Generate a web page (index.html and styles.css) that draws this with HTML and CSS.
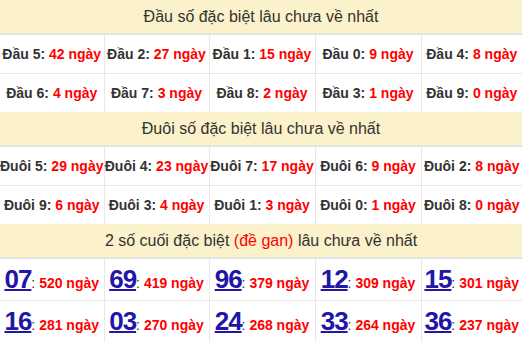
FILE: index.html
```html
<!DOCTYPE html>
<html lang="vi">
<head>
<meta charset="utf-8">
<title>Gan đặc biệt</title>
<link rel="stylesheet" href="styles.css">
</head>
<body>
<table class="gan">
  <colgroup>
    <col class="c1"><col class="c2"><col class="c3"><col class="c4"><col class="c5">
  </colgroup>
  <tr class="head"><th colspan="5">Đầu số đặc biệt lâu chưa về nhất</th></tr>
  <tr>
    <td>Đầu 5: <span class="v">42 ngày</span></td>
    <td>Đầu 2: <span class="v">27 ngày</span></td>
    <td>Đầu 1: <span class="v">15 ngày</span></td>
    <td>Đầu 0: <span class="v">9 ngày</span></td>
    <td>Đầu 4: <span class="v">8 ngày</span></td>
  </tr>
  <tr>
    <td>Đầu 6: <span class="v">4 ngày</span></td>
    <td>Đầu 7: <span class="v">3 ngày</span></td>
    <td>Đầu 8: <span class="v">2 ngày</span></td>
    <td>Đầu 3: <span class="v">1 ngày</span></td>
    <td>Đầu 9: <span class="v">0 ngày</span></td>
  </tr>
  <tr class="head"><th colspan="5">Đuôi số đặc biệt lâu chưa về nhất</th></tr>
  <tr>
    <td>Đuôi 5: <span class="v">29 ngày</span></td>
    <td>Đuôi 4: <span class="v">23 ngày</span></td>
    <td>Đuôi 7: <span class="v">17 ngày</span></td>
    <td>Đuôi 6: <span class="v">9 ngày</span></td>
    <td>Đuôi 2: <span class="v">8 ngày</span></td>
  </tr>
  <tr>
    <td>Đuôi 9: <span class="v">6 ngày</span></td>
    <td>Đuôi 3: <span class="v">4 ngày</span></td>
    <td>Đuôi 1: <span class="v">3 ngày</span></td>
    <td>Đuôi 0: <span class="v">1 ngày</span></td>
    <td>Đuôi 8: <span class="v">0 ngày</span></td>
  </tr>
  <tr class="head"><th colspan="5">2 số cuối đặc biệt <span class="red">(đề gan)</span> lâu chưa về nhất</th></tr>
  <tr class="big">
    <td><a class="num" href="#">07</a><span class="colon">:</span> <span class="v sm">520 ngày</span></td>
    <td><a class="num" href="#">69</a><span class="colon">:</span> <span class="v sm">419 ngày</span></td>
    <td><a class="num" href="#">96</a><span class="colon">:</span> <span class="v sm">379 ngày</span></td>
    <td><a class="num" href="#">12</a><span class="colon">:</span> <span class="v sm">309 ngày</span></td>
    <td><a class="num" href="#">15</a><span class="colon">:</span> <span class="v sm">301 ngày</span></td>
  </tr>
  <tr class="big">
    <td><a class="num" href="#">16</a><span class="colon">:</span> <span class="v sm">281 ngày</span></td>
    <td><a class="num" href="#">03</a><span class="colon">:</span> <span class="v sm">270 ngày</span></td>
    <td><a class="num" href="#">24</a><span class="colon">:</span> <span class="v sm">268 ngày</span></td>
    <td><a class="num" href="#">33</a><span class="colon">:</span> <span class="v sm">264 ngày</span></td>
    <td><a class="num" href="#">36</a><span class="colon">:</span> <span class="v sm">237 ngày</span></td>
  </tr>
</table>
</body>
</html>
```
FILE: styles.css
```css
html, body {
  margin: 0;
  padding: 0;
  background: #fff;
}

body {
  font-family: "Liberation Sans", Arial, sans-serif;
  color: #333;
}

.gan {
  width: 522px;
  border-collapse: collapse;
  table-layout: fixed;
}

.c1 { width: 104px; }
.c2 { width: 105px; }
.c3 { width: 106px; }
.c4 { width: 106px; }
.c5 { width: 101px; }

.gan th {
  background: #fbf1cb;
  font-weight: normal;
  font-size: 16px;
  color: #333;
  height: 33px;
  padding: 0;
  text-align: center;
  border: none;
  border-bottom: 2px solid #e4e4e4;
}

.gan td {
  height: 38px;
  padding: 0;
  text-align: center;
  vertical-align: middle;
  font-weight: bold;
  font-size: 14px;
  color: #333;
  white-space: nowrap;
  border-top: 1px solid #e8e8e8;
  border-left: 1px solid #e8e8e8;
  border-right: 1px solid #e8e8e8;
  border-bottom: none;
}

.gan td:first-child { border-left: none; }
.gan td:last-child { border-right: none; }

.v { color: #f00; }
.red { color: #f00; }

.big td { height: 41px; }

.num {
  font-size: 26px;
  font-weight: bold;
  letter-spacing: -1px;
  color: #2216a6;
  text-decoration: underline;
  text-decoration-thickness: 2px;
}

.colon {
  font-weight: normal;
  color: #333;
}

.sm { font-size: 14px; }
```
